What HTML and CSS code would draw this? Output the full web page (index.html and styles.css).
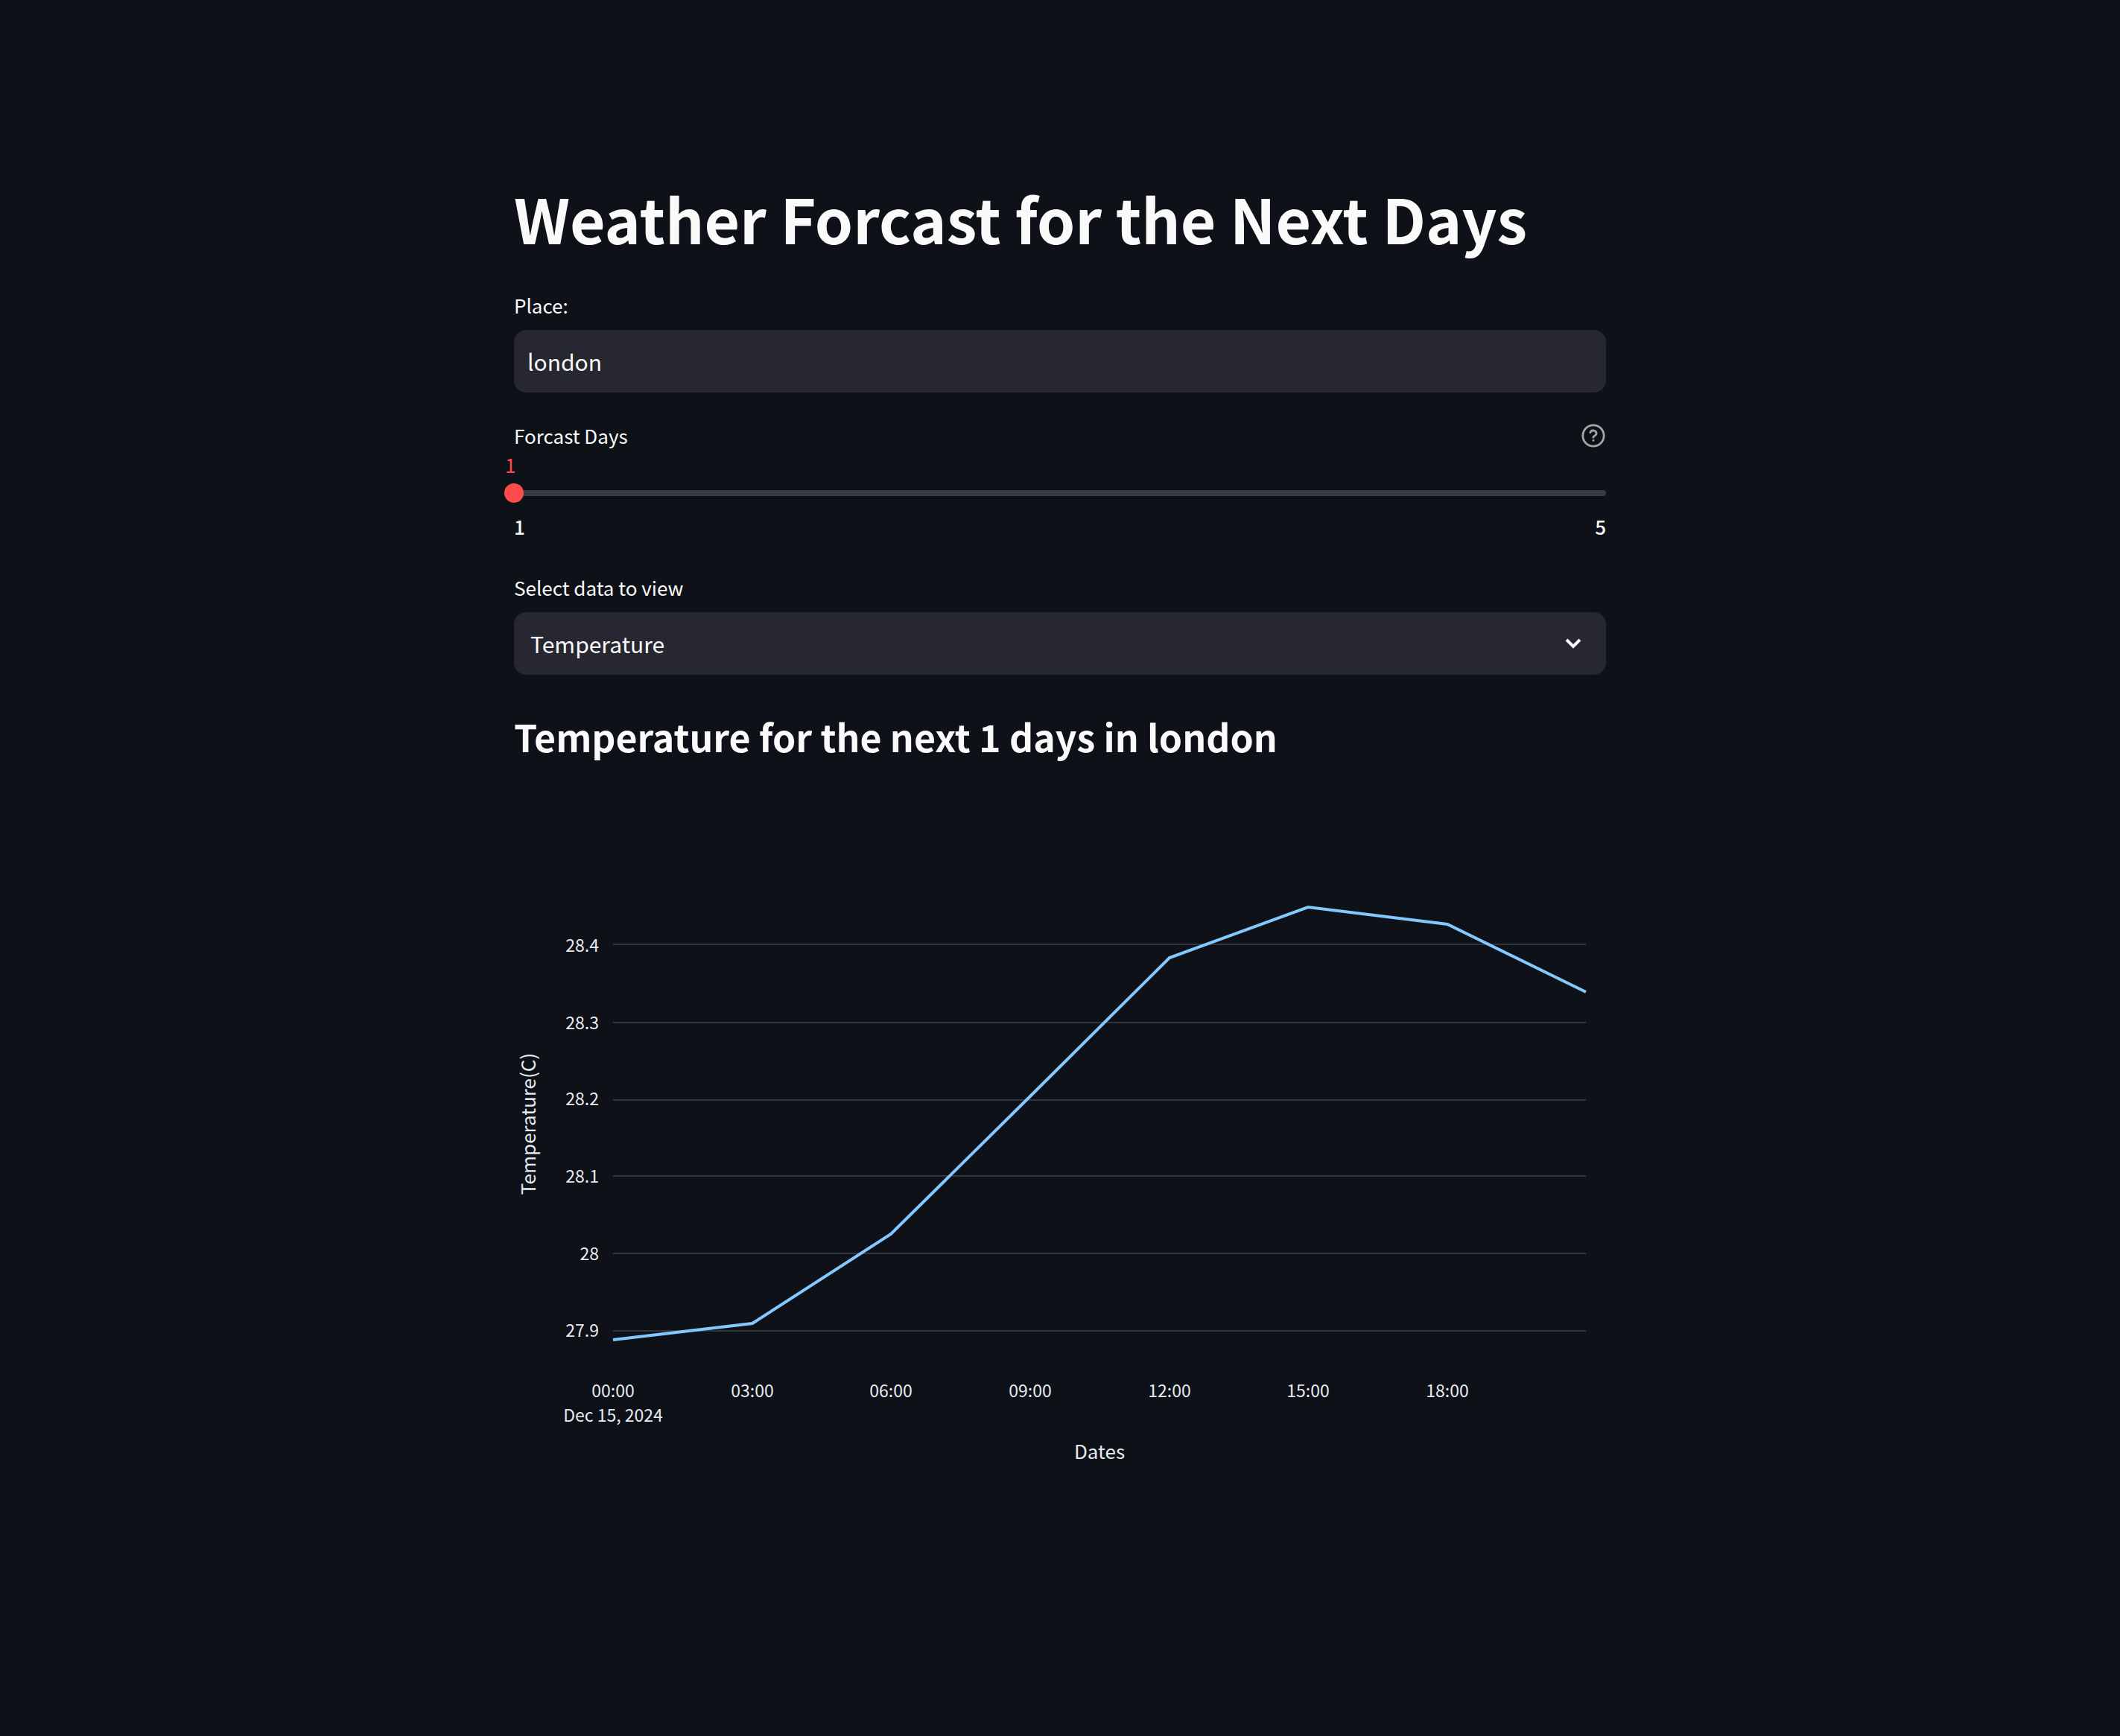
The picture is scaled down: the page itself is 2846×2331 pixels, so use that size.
FILE: index.html
```html
<!DOCTYPE html>
<html lang="en">
<head>
<meta charset="utf-8">
<meta name="viewport" content="width=device-width, initial-scale=1">
<title>Weather Forcast</title>
<link rel="stylesheet" href="styles.css">
</head>
<body>
<main class="page">
  <h1 class="title">Weather Forcast for the Next Days</h1>

  <div class="field">
    <label class="label" for="place">Place:</label>
    <input class="control" id="place" type="text" value="london">
  </div>

  <div class="field slider">
    <div class="label-row">
      <label class="label" for="days">Forcast Days</label>
      <button class="help" type="button" aria-label="Help">
        <svg viewBox="0 0 24 24" aria-hidden="true"><circle cx="12" cy="12" r="10"/><path d="M9.1 9a3 3 0 0 1 5.8 1c0 2-3 2.200-3 3.600"/><path d="M12 16.500h.01"/></svg>
      </button>
    </div>
    <output class="value" for="days">1</output>
    <div class="range">
      <span class="track"></span>
      <input class="range-input" id="days" type="range" min="1" max="5" value="1">
    </div>
    <div class="ticks"><span>1</span><span>5</span></div>
  </div>

  <div class="field">
    <label class="label" for="data">Select data to view</label>
    <div class="select">
      <select class="control select-input" id="data">
        <option>Temperature</option>
        <option>Sky</option>
      </select>
      <svg class="chevron" viewBox="0 0 22 16" aria-hidden="true"><path d="M2 3l9 9 9-9"/></svg>
    </div>
  </div>

  <h2 class="subtitle">Temperature for the next 1 days in london</h2>

  <svg class="chart" viewBox="0 0 1466 940" role="img" aria-label="Temperature by date">
    <g class="grid">
      <path d="M133 207H1439M133 312H1439M133 416H1439M133 518H1439M133 622H1439M133 726H1439"/>
    </g>
    <polyline class="line" points="133,738 320,716 506,596 693,411 880,225 1066,157 1253,180 1439,271"/>
    <g class="tick tick-y">
      <text x="114" y="217">28.4</text>
      <text x="114" y="321">28.3</text>
      <text x="114" y="423">28.2</text>
      <text x="114" y="527">28.1</text>
      <text x="114" y="631">28</text>
      <text x="114" y="734">27.9</text>
    </g>
    <g class="tick tick-x">
      <text x="133" y="815">00:00</text>
      <text x="133" y="848">Dec 15, 2024</text>
      <text x="320" y="815">03:00</text>
      <text x="506" y="815">06:00</text>
      <text x="693" y="815">09:00</text>
      <text x="880" y="815">12:00</text>
      <text x="1066" y="815">15:00</text>
      <text x="1253" y="815">18:00</text>
    </g>
    <text class="axis" x="786" y="898">Dates</text>
    <text class="axis" transform="translate(29 448) rotate(-90)">Temperature(C)</text>
  </svg>
</main>
</body>
</html>
```

FILE: styles.css
```css
* {
  box-sizing: border-box;
}

body {
  margin: 0;
  min-height: 100vh;
  background: #0e1117;
  color: #fafafa;
  font-family: "Noto Sans CJK SC", "Noto Sans", sans-serif;
}

.page {
  max-width: 1466px;
  margin: 0 auto;
  padding: 238px 0 120px;
}

.title {
  margin: 0 0 42px;
  font-size: 82px;
  line-height: 110px;
  font-weight: 700;
}

.field {
  display: flex;
  flex-direction: column;
  margin-bottom: 38px;
}

.label {
  margin-bottom: 13px;
  font-size: 26px;
  line-height: 40px;
}

.control {
  width: 100%;
  height: 84px;
  margin: 0;
  padding: 0 18px;
  border: 0;
  border-radius: 16px;
  background: #262730;
  color: #fafafa;
  font: inherit;
  font-size: 30px;
}

.slider {
  margin-bottom: 49px;
}

.label-row {
  display: flex;
  justify-content: space-between;
  align-items: center;
  margin-bottom: 6px;
}

.label-row .label {
  margin: 0;
}

.help {
  display: flex;
  padding: 0;
  border: 0;
  background: none;
}

.help svg {
  width: 34px;
  height: 34px;
  fill: none;
  stroke: #a3a4a8;
  stroke-width: 2;
  stroke-linecap: round;
}

.value {
  margin: 0 0 12px -12px;
  font-size: 26px;
  line-height: 26px;
  color: #ff4b4b;
}

.range {
  display: grid;
  align-items: center;
}

.track,
.range-input {
  grid-area: 1 / 1;
}

.track {
  height: 8px;
  border-radius: 4px;
  background: #373a42;
}

.range-input {
  appearance: none;
  width: calc(100% + 26px);
  height: 26px;
  margin: 0 -13px;
  background: none;
}

.range-input::-webkit-slider-thumb {
  appearance: none;
  width: 26px;
  height: 26px;
  border-radius: 50%;
  background: #ff4b4b;
}

.ticks {
  display: flex;
  justify-content: space-between;
  margin-top: 19px;
  font-size: 26px;
  line-height: 26px;
  font-weight: 500;
}

.select {
  display: grid;
  align-items: center;
}

.select-input,
.chevron {
  grid-area: 1 / 1;
}

.select-input {
  appearance: none;
  padding: 0 22px;
}

.chevron {
  justify-self: end;
  width: 22px;
  height: 16px;
  margin-right: 33px;
  fill: none;
  stroke: #fafafa;
  stroke-width: 4;
  pointer-events: none;
}

.subtitle {
  margin: 47px 0 38px;
  font-size: 50px;
  line-height: 70px;
  font-weight: 600;
}

.chart {
  display: block;
  width: 100%;
}

.grid {
  stroke: #31343c;
  stroke-width: 2;
}

.line {
  fill: none;
  stroke: #83c9ff;
  stroke-width: 4;
}

.tick {
  fill: #e6eaf1;
  font-size: 23px;
}

.tick-y {
  text-anchor: end;
}

.tick-x,
.axis {
  text-anchor: middle;
}

.axis {
  fill: #e6eaf1;
  font-size: 26px;
}
```
